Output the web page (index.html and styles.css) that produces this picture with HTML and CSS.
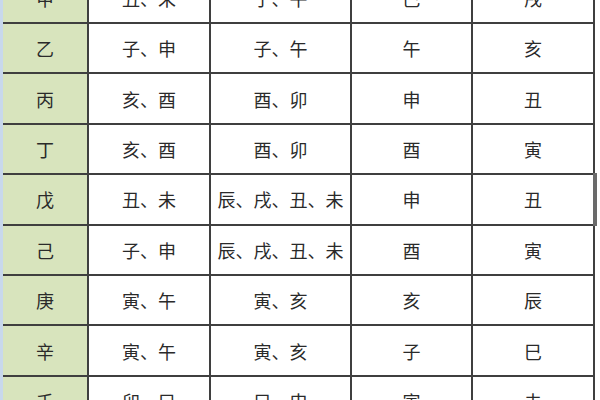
FILE: index.html
```html
<!DOCTYPE html>
<html lang="zh-CN">
<head>
<meta charset="utf-8">
<link rel="stylesheet" href="styles.css">
</head>
<body>
<div class="sheet">
  <div class="grid">
    <div class="cell head">甲</div><div class="cell">丑、未</div><div class="cell">子、午</div><div class="cell">巳</div><div class="cell">戌</div>
    <div class="cell head">乙</div><div class="cell">子、申</div><div class="cell">子、午</div><div class="cell">午</div><div class="cell">亥</div>
    <div class="cell head">丙</div><div class="cell">亥、酉</div><div class="cell">酉、卯</div><div class="cell">申</div><div class="cell">丑</div>
    <div class="cell head">丁</div><div class="cell">亥、酉</div><div class="cell">酉、卯</div><div class="cell">酉</div><div class="cell">寅</div>
    <div class="cell head active">戊</div><div class="cell">丑、未</div><div class="cell">辰、戌、丑、未</div><div class="cell">申</div><div class="cell sel">丑</div>
    <div class="cell head">己</div><div class="cell">子、申</div><div class="cell">辰、戌、丑、未</div><div class="cell">酉</div><div class="cell">寅</div>
    <div class="cell head">庚</div><div class="cell">寅、午</div><div class="cell">寅、亥</div><div class="cell">亥</div><div class="cell">辰</div>
    <div class="cell head">辛</div><div class="cell">寅、午</div><div class="cell">寅、亥</div><div class="cell">子</div><div class="cell">巳</div>
    <div class="cell head">壬</div><div class="cell">卯、巳</div><div class="cell">巳、申</div><div class="cell">寅</div><div class="cell">未</div>
  </div>
</div>
</body>
</html>
```

FILE: styles.css
```css
html, body {
  margin: 0;
  padding: 0;
  background: #ffffff;
  overflow: hidden;
  width: 600px;
  height: 400px;
}
.sheet {
  display: flex;
  border-left: 3px solid #c8d8ec;
  width: 597px;
  height: 400px;
  overflow: hidden;
  background: #ffffff;
}
.grid {
  margin-top: -26.4px;
  display: grid;
  grid-template-columns: 84px 120px 139px 119px 120px;
  grid-auto-rows: 48.4px;
  gap: 2px;
  background: #3f3f3f;
  border-right: 2px solid #3f3f3f;
  align-self: flex-start;
  font-family: "Noto Sans CJK SC", "Noto Sans CJK JP", sans-serif;
  font-size: 18px;
  color: #2a2a2a;
}
.cell {
  background: #ffffff;
  display: flex;
  align-items: center;
  justify-content: center;
  position: relative;
  line-height: 1;
}
.head {
  background: #d8e4bd;
}
.active::before {
  content: "";
  position: absolute;
  left: -3px;
  top: 0;
  bottom: 0;
  width: 3px;
  background: #f4b860;
}
.sel::after {
  content: "";
  position: absolute;
  right: -4px;
  top: -2px;
  bottom: -2px;
  width: 4px;
  background: #6a6a6a;
}
```
